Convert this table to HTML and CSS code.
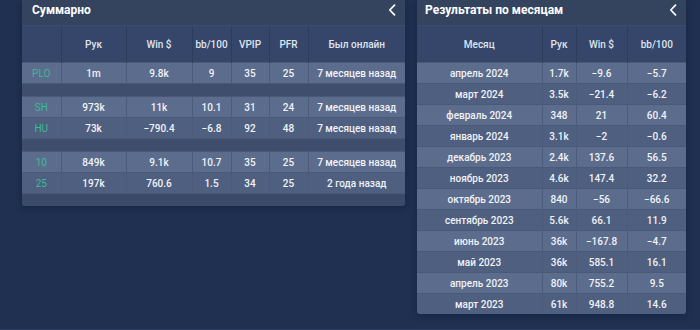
FILE: index.html
```html
<!DOCTYPE html>
<html lang="ru">
<head>
<meta charset="utf-8">
<link rel="stylesheet" href="styles.css">
</head>
<body>
<div class="page">
  <section class="panel panel-left">
    <header class="panel-head">
      <h2 class="panel-title">Суммарно</h2>
      <svg class="chev" width="8" height="12" viewBox="0 0 8 12"><path d="M6.5 1.2 L1.8 6 L6.5 10.8" fill="none" stroke="#fff" stroke-width="1.7" stroke-linecap="round" stroke-linejoin="round"/></svg>
    </header>
    <table class="tbl tbl-sum">
      <colgroup><col style="width:39px"><col style="width:65px"><col style="width:66px"><col style="width:39px"><col style="width:38px"><col style="width:39px"><col style="width:97px"></colgroup>
      <thead><tr><th></th><th>Рук</th><th>Win $</th><th>bb/100</th><th>VPIP</th><th>PFR</th><th>Был онлайн</th></tr></thead>
      <tbody>
        <tr class="light"><td class="lbl">PLO</td><td>1m</td><td>9.8k</td><td>9</td><td>35</td><td>25</td><td>7 месяцев назад</td></tr>
        <tr class="gap"><td colspan="7"></td></tr>
        <tr class="light"><td class="lbl">SH</td><td>973k</td><td>11k</td><td>10.1</td><td>31</td><td>24</td><td>7 месяцев назад</td></tr>
        <tr class="dark"><td class="lbl">HU</td><td>73k</td><td>−790.4</td><td>−6.8</td><td>92</td><td>48</td><td>7 месяцев назад</td></tr>
        <tr class="gap"><td colspan="7"></td></tr>
        <tr class="light"><td class="lbl">10</td><td>849k</td><td>9.1k</td><td>10.7</td><td>35</td><td>25</td><td>7 месяцев назад</td></tr>
        <tr class="dark"><td class="lbl">25</td><td>197k</td><td>760.6</td><td>1.5</td><td>34</td><td>25</td><td>2 года назад</td></tr>
      </tbody>
    </table>
    <div class="panel-foot"></div>
  </section>
  <section class="panel panel-right">
    <header class="panel-head">
      <h2 class="panel-title">Результаты по месяцам</h2>
      <svg class="chev" width="8" height="12" viewBox="0 0 8 12"><path d="M6.5 1.2 L1.8 6 L6.5 10.8" fill="none" stroke="#fff" stroke-width="1.7" stroke-linecap="round" stroke-linejoin="round"/></svg>
    </header>
    <table class="tbl tbl-month">
      <colgroup><col style="width:125px"><col style="width:34px"><col style="width:51px"><col style="width:59px"></colgroup>
      <thead><tr><th>Месяц</th><th>Рук</th><th>Win $</th><th>bb/100</th></tr></thead>
      <tbody>
        <tr class="light"><td>апрель 2024</td><td>1.7k</td><td>−9.6</td><td>−5.7</td></tr>
        <tr class="dark"><td>март 2024</td><td>3.5k</td><td>−21.4</td><td>−6.2</td></tr>
        <tr class="light"><td>февраль 2024</td><td>348</td><td>21</td><td>60.4</td></tr>
        <tr class="dark"><td>январь 2024</td><td>3.1k</td><td>−2</td><td>−0.6</td></tr>
        <tr class="light"><td>декабрь 2023</td><td>2.4k</td><td>137.6</td><td>56.5</td></tr>
        <tr class="dark"><td>ноябрь 2023</td><td>4.6k</td><td>147.4</td><td>32.2</td></tr>
        <tr class="light"><td>октябрь 2023</td><td>840</td><td>−56</td><td>−66.6</td></tr>
        <tr class="dark"><td>сентябрь 2023</td><td>5.6k</td><td>66.1</td><td>11.9</td></tr>
        <tr class="light"><td>июнь 2023</td><td>36k</td><td>−167.8</td><td>−4.7</td></tr>
        <tr class="dark"><td>май 2023</td><td>36k</td><td>585.1</td><td>16.1</td></tr>
        <tr class="light"><td>апрель 2023</td><td>80k</td><td>755.2</td><td>9.5</td></tr>
        <tr class="dark"><td>март 2023</td><td>61k</td><td>948.8</td><td>14.6</td></tr>
      </tbody>
    </table>
  </section>
</div>
</body>
</html>
```
FILE: styles.css
```css
html, body {
  margin: 0;
  padding: 0;
  background: #1f3051;
  height: 100%;
}
body {
  font-family: "Roboto", "Liberation Sans", sans-serif;
  color: #eef1f6;
  overflow: hidden;
}
.page {
  display: flex;
  align-items: flex-start;
  gap: 12px;
  padding-left: 22px;
  height: 330px;
  box-sizing: border-box;
  border-bottom: 1px solid #2f4163;
}
.panel {
  background: #34445f;
  border-radius: 0 0 3px 3px;
  box-shadow: 0 2px 6px rgba(10, 20, 40, 0.35);
  overflow: hidden;
}
.panel-left { width: 383px; }
.panel-right { width: 269px; }
.panel-head {
  height: 25px;
  display: flex;
  align-items: center;
  justify-content: space-between;
  padding: 0 9px 0 10px;
  box-sizing: border-box;
}
.panel-right .panel-head { padding-left: 8px; }
.panel-title {
  margin: 0;
  font-size: 12px;
  font-weight: 700;
  color: #ffffff;
  position: relative;
  top: -3px;
}
.chev { position: relative; top: -3px; }
.tbl {
  border-collapse: collapse;
  table-layout: fixed;
  width: 100%;
  font-size: 10px;
  font-weight: 500;
}
.tbl th {
  height: 36px;
  padding: 0;
  font-weight: 500;
  color: #dfe4ee;
  background: #35466a;
  border-left: 1px solid #2e3d5c;
  border-top: 1px solid #3c4c6c;
  text-align: center;
}
.tbl th:first-child { border-left: none; }
.tbl td {
  height: 20px;
  padding: 0;
  text-align: center;
  color: #f1f3f8;
  border-left: 1px solid #4c5b7a;
  border-top: 1px solid #4a5977;
  white-space: nowrap;
}
.tbl td:first-child { border-left: none; }
.tbl tr.light td { background: #5c6c8c; }
.tbl tr.dark td { background: #4f5f7f; }
.tbl tr.gap td {
  height: 12px;
  background: #3e4e6c;
  border-left: none;
}
.tbl td.lbl { color: #3dbb98; font-weight: 400; }
.panel-foot { height: 12px; background: #3a4a68; border-top: 1px solid #4a5977; }
```
